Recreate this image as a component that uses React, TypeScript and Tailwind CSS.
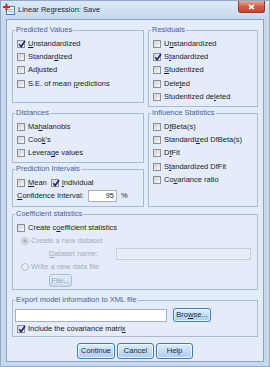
import React, { ReactNode } from 'react';

const Mn = ({ children }: { children: ReactNode }) => <u className="underline underline-offset-1">{children}</u>;

const CheckBox = ({ checked }: { checked?: boolean }) => (
  <span className="relative flex h-[8px] w-[8px] shrink-0 items-center justify-center border border-[#8e9093] bg-linear-to-br from-[#cfd2d6] to-[#f7f7f7]">
    {checked && (
      <svg width="8" height="8" viewBox="0 0 8 8" className="absolute left-[0px] top-[-1px]">
        <path d="M1.2 4.2 L3.2 6.6 L7 1" fill="none" stroke="#1c2a70" strokeWidth="1.7" />
      </svg>
    )}
  </span>
);

const Check = ({ checked, children }: { checked?: boolean; children: ReactNode }) => (
  <div className="flex h-[13.3px] items-center gap-[3px]">
    <CheckBox checked={checked} />
    <span>{children}</span>
  </div>
);

const Radio = ({ dot, children }: { dot?: boolean; children: ReactNode }) => (
  <div className="flex h-[13px] items-center gap-[2px] pl-[4px] text-[#a3adbb]">
    <span className="flex h-[8px] w-[8px] items-center justify-center rounded-full border border-[#b7c0cc] bg-[#e9edf2]">
      {dot && <span className="h-[4px] w-[4px] rounded-full bg-[#a9b2bf]" />}
    </span>
    <span>{children}</span>
  </div>
);

const Group = ({ title, className, children }: { title: string; className: string; children: ReactNode }) => (
  <fieldset className={`m-0 min-w-0 border border-[#aabbd0] px-[4px] ${className}`}>
    <legend className="-ml-[2px] px-[1px] leading-[10px] text-[#4c5d9c]">{title}</legend>
    {children}
  </fieldset>
);

const Btn = ({ children, className = '' }: { children: ReactNode; className?: string }) => (
  <div className={`flex items-center justify-center rounded-[3px] border border-[#3f7db5] bg-linear-to-b from-[#dcedfb] to-[#a9cdef] text-[#1b2540] shadow-[inset_0_0_0_1px_#eef7ff] ${className}`}>
    {children}
  </div>
);

const AppIcon = () => (
  <svg width="12" height="12" viewBox="0 0 12 12" className="ml-[2px] mt-[2px] shrink-0">
    <rect x="3.5" y="3.5" width="8" height="8" fill="#f4f8fd" stroke="#4d7fbf" />
    <rect x="5" y="6" width="5" height="1" fill="#8eb0da" />
    <rect x="5" y="8" width="5" height="1" fill="#8eb0da" />
    <rect x="2.5" y="0.5" width="2" height="7" fill="#d8262a" />
    <rect x="0" y="3" width="7" height="2" fill="#d8262a" />
  </svg>
);

export default function App() {
  return (
    <div className="flex h-[367px] w-[270px] flex-col border border-[#93abc9] bg-[#c6d9ee] font-['Liberation_Sans',Arial,sans-serif] text-[7.5px] leading-none text-[#1c1c1c]">
      <div className="flex h-[18px] shrink-0 items-start bg-linear-to-b from-[#dde9f7] to-[#c6d9ee]">
        <AppIcon />
        <span className="ml-[3px] mt-[5px] text-[7.5px] text-[#1b2638]">Linear Regression: Save</span>
        <div className="ml-auto mr-[4px] flex h-[12px] w-[27px] items-center justify-center rounded-b-[3px] border border-t-0 border-[#8c3a2e] bg-linear-to-b from-[#eaa89a] via-[#d65c43] to-[#c9452c]">
          <svg width="7" height="6" viewBox="0 0 7 6">
            <path d="M1 0.8 L6 5.2 M6 0.8 L1 5.2" stroke="#fff" strokeWidth="1.6" />
          </svg>
        </div>
      </div>

      <div className="mx-[5px] mb-[4px] flex flex-1 flex-col border border-[#8ca4c1] bg-[#e3ecf8] px-[5px] pt-[5px]">
        <div className="flex gap-[4px]">
          <div className="flex w-[132px] flex-col">
            <Group title="Predicted Values" className="h-[78px] pt-[2px]">
              <Check checked><Mn>U</Mn>nstandardized</Check>
              <Check>Standar<Mn>d</Mn>ized</Check>
              <Check>Adjusted</Check>
              <Check>S.E. of mean <Mn>p</Mn>redictions</Check>
            </Group>
            <Group title="Distances" className="mt-[5px] h-[55px] pt-[2px]">
              <Check>Ma<Mn>h</Mn>alanobis</Check>
              <Check>Coo<Mn>k</Mn>'s</Check>
              <Check>Levera<Mn>g</Mn>e values</Check>
            </Group>
            <Group title="Prediction Intervals" className="mt-[1px] h-[43px] pt-[2px]">
              <div className="flex h-[13px] items-center">
                <Check><Mn>M</Mn>ean</Check>
                <div className="ml-[4px]">
                  <Check checked><Mn>I</Mn>ndividual</Check>
                </div>
              </div>
              <div className="flex h-[13px] items-center">
                <span className="w-[71px]"><Mn>C</Mn>onfidence Interval:</span>
                <div className="flex h-[12px] w-[29px] items-center justify-end border border-[#a7b1bf] bg-white pr-[2px]">95</div>
                <span className="ml-[4px]">%</span>
              </div>
            </Group>
          </div>

          <div className="flex w-[110px] flex-col">
            <Group title="Residuals" className="h-[82px] pt-[2px]">
              <Check>U<Mn>n</Mn>standardized</Check>
              <Check checked>S<Mn>t</Mn>andardized</Check>
              <Check><Mn>S</Mn>tudentized</Check>
              <Check>Dele<Mn>t</Mn>ed</Check>
              <Check>Studentized de<Mn>l</Mn>eted</Check>
            </Group>
            <Group title="Influence Statistics" className="mt-[1px] h-[99px] pt-[2px]">
              <Check>D<Mn>f</Mn>Beta(s)</Check>
              <Check>Standardi<Mn>z</Mn>ed DfBeta(s)</Check>
              <Check>D<Mn>f</Mn>Fit</Check>
              <Check>S<Mn>t</Mn>andardized DfFit</Check>
              <Check>Co<Mn>v</Mn>ariance ratio</Check>
            </Group>
          </div>
        </div>

        <Group title="Coefficient statistics" className="mt-[2px] h-[81px] pt-[2px]">
          <div className="flex h-[13px] items-center gap-[3px]">
            <CheckBox />
            <span>Create c<Mn>o</Mn>efficient statistics</span>
          </div>
          <Radio dot>Create a new dataset</Radio>
          <div className="flex h-[13px] items-center">
            <span className="ml-[32px] w-[67px] text-[#a3adbb]"><Mn>D</Mn>ataset name:</span>
            <div className="h-[12px] w-[135px] border border-[#c6d0dc] bg-[#e6eef9]" />
          </div>
          <Radio>Write a new data file</Radio>
          <div className="ml-[32px] mt-[1px] flex h-[13px] w-[23px] items-center justify-center rounded-[3px] border border-[#a9bfd8] bg-linear-to-b from-[#e4eefa] to-[#cbdcf0] text-[#9aa6b6]">
            File...
          </div>
        </Group>

        <Group title="Export model information to XML file" className="mt-[5px] h-[42px] pt-[3px]">
          <div className="flex items-center">
            <div className="-ml-[2px] h-[13px] w-[152px] border border-[#a6b0be] bg-white" />
            <Btn className="ml-[6px] h-[14px] w-[38px]">Bro<Mn>w</Mn>se...</Btn>
          </div>
          <div className="flex h-[13px] items-center gap-[3px]">
            <CheckBox checked />
            <span>Include the covariance matri<Mn>x</Mn></span>
          </div>
        </Group>

        <div className="mt-[6px] flex justify-center gap-[2px]">
          <Btn className="h-[16px] w-[38px] border-[#2f6aa3]">Continue</Btn>
          <Btn className="h-[16px] w-[37px]">Cancel</Btn>
          <Btn className="h-[16px] w-[37px]">Help</Btn>
        </div>
      </div>
    </div>
  );
}
